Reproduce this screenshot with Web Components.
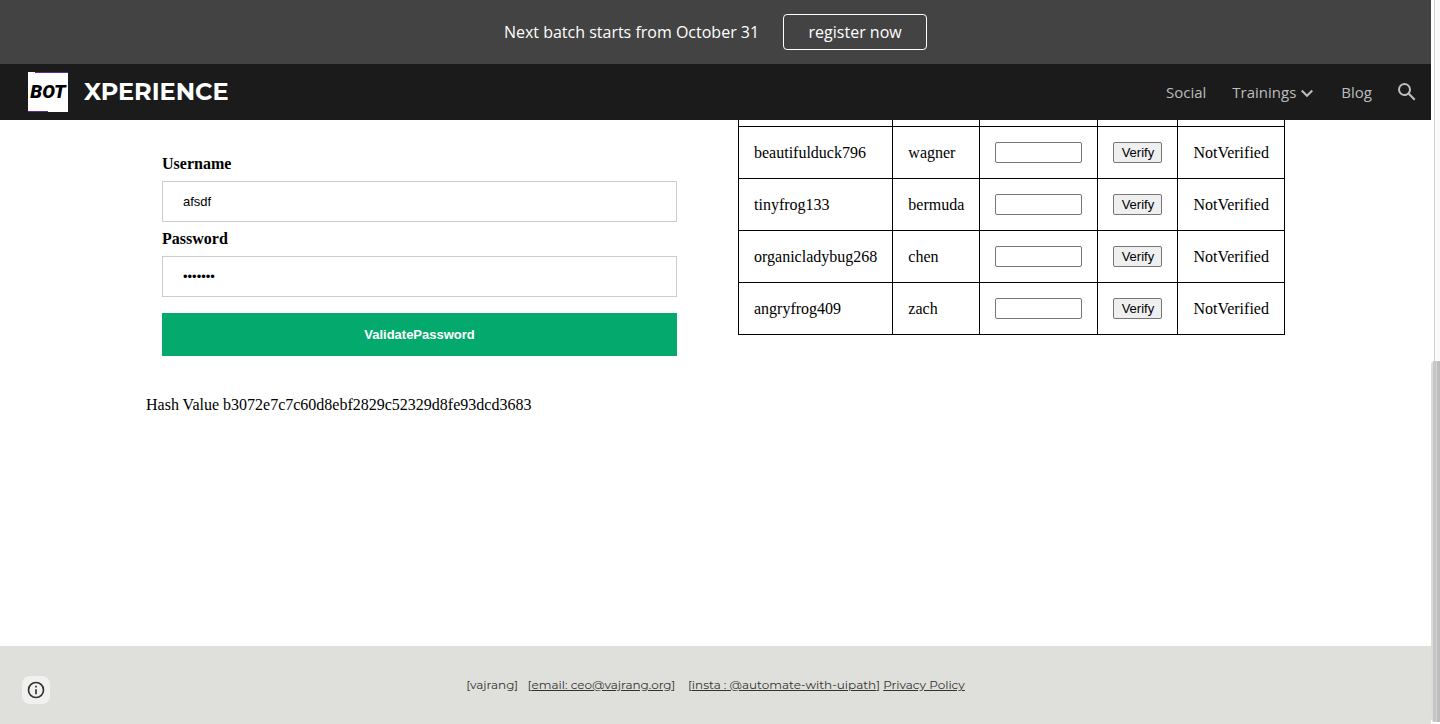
<!DOCTYPE html>
<html lang="en">
<head>
<meta charset="utf-8">
<meta name="viewport" content="width=device-width, initial-scale=1">
<title>Bot Xperience</title>
<style>
body { margin: 0; background: #fff; }
</style>
</head>
<body>
<bot-page></bot-page>
<script>
const define = (name, html, setup) => customElements.define(name, class extends HTMLElement {
  constructor() {
    super();
    const template = document.createElement('template');
    template.innerHTML = html;
    this.attachShadow({ mode: 'open' }).append(template.content.cloneNode(true));
  }
  connectedCallback() {
    if (setup && !this.ready) { this.ready = true; setup(this.shadowRoot, this); }
  }
});

define('promo-banner', `
<style>
:host { display: flex; align-items: center; justify-content: center; gap: 24px; height: 64px;
  background: #434343; color: #fff; font: 500 16px/24px "Open Sans", sans-serif; }
a { box-sizing: border-box; height: 36px; min-width: 144px; padding: 5px 20px; border: 1px solid #fff; border-radius: 4px;
  color: inherit; text-align: center; text-decoration: none; }
</style>
<span><slot></slot></span><a href="#register">register now</a>`);

define('bot-logo', `
<style>
:host { display: block; width: 40px; height: 40px; }
svg { display: block; }
text { font: italic 900 19px Roboto, "Liberation Sans", sans-serif; }
</style>
<svg width="40" height="40" viewBox="0 0 40 40" role="img" aria-label="BOT">
<rect width="40" height="40" fill="#fff"/>
<path d="M7 0h33v1H7zM0 39h20v1H0z" fill="#5b2ba0"/>
<text x="20" y="26" text-anchor="middle">BOT</text>
</svg>`);

define('site-header', `
<style>
:host { display: flex; align-items: center; height: 56px; padding: 0 12px 0 28px; background: #1b1b1b; color: #bdbdbd;
  font: 15px/20px "Open Sans", sans-serif; }
a { color: inherit; text-decoration: none; }
.brand { display: flex; align-items: center; gap: 16px; margin-right: auto; color: #fff;
  font: 700 24px/32px Montserrat, Inter, sans-serif; }
nav { display: flex; align-items: center; gap: 26px; }
nav a { display: flex; align-items: center; gap: 3px; }
button { display: block; padding: 0; border: 0; background: none; color: inherit; margin-left: -3px; }
svg { display: block; }
</style>
<a class="brand" href="#home"><bot-logo></bot-logo><span>XPERIENCE</span></a>
<nav>
<a href="#social">Social</a>
<a href="#trainings">Trainings <svg width="16" height="16" viewBox="0 0 16 16" fill="none" stroke="currentColor" stroke-width="2"><path d="M2.700 6.500L8 11.800l5.300-5.300"/></svg></a>
<a href="#blog">Blog</a>
<button aria-label="Search"><svg width="24" height="24" viewBox="0 0 24 24" fill="currentColor"><path d="M20.49 19l-5.73-5.73C15.53 12.2 16 10.91 16 9.5A6.5 6.5 0 1 0 9.5 16c1.41 0 2.7-.47 3.77-1.24L19 20.49 20.49 19zM5 9.500C5 7.010 7.010 5 9.500 5S14 7.010 14 9.500 11.990 14 9.500 14 5 11.990 5 9.500z"/></svg></button>
</nav>`);

define('login-form', `
<style>
:host { display: block; padding: 34px 16px 0; font: 16px/20px "Liberation Serif", serif; }
label { display: block; font-weight: 700; }
input { display: block; box-sizing: border-box; width: 100%; height: 41px; margin: 7px 0; padding: 12px 20px;
  border: 1px solid #ccc; background: #fff; color: #000; font: 13px/15px "Liberation Sans", sans-serif; }
button { display: block; width: 100%; height: 43px; margin-top: 16px; border: 0; background: #04aa6d; color: #fff;
  font: 700 13px/15px "Liberation Sans", sans-serif; }
</style>
<form onsubmit="return false">
<label for="user">Username</label><input id="user" type="text" value="afsdf">
<label for="pass">Password</label><input id="pass" type="password" value="abcdefg">
<button type="submit">ValidatePassword</button>
</form>`);

define('hash-result', `
<style>
:host { display: block; padding-top: 39px; font: 16px/20px "Liberation Serif", serif; }
</style>
<output>Hash Value <slot></slot></output>`);

define('user-table', `
<style>
:host { display: block; font: 16px/20px "Liberation Serif", serif; }
table { width: 100%; border-collapse: collapse; }
td { box-sizing: border-box; height: 52px; padding: 1px 15px 0; border: 1px solid #000; }
tr:first-child td { height: 6px; border-top: 0; }
td:nth-child(3) { width: 118px; }
td:nth-child(4) { width: 80px; }
input, button { display: block; box-sizing: border-box; font: 13px/15px "Liberation Sans", sans-serif; border: 1px solid #767676; }
input { width: 87px; height: 21px; border-radius: 2px; background: #fff; }
button { width: 49px; height: 21px; padding: 0; border-radius: 2px; background: #efefef; color: #000; }
</style>
<table><tbody><tr><td></td><td></td><td></td><td></td><td></td></tr></tbody></table>`, root => {
  const body = root.querySelector('tbody');
  for (const [user, password] of [['beautifulduck796', 'wagner'], ['tinyfrog133', 'bermuda'], ['organicladybug268', 'chen'], ['angryfrog409', 'zach']]) {
    body.insertAdjacentHTML('beforeend', `<tr><td>${user}</td><td>${password}</td><td><input type="text" aria-label="Hash for ${user}"></td><td><button type="button">Verify</button></td><td>NotVerified</td></tr>`);
  }
});

define('site-footer', `
<style>
:host { display: flex; align-items: center; justify-content: center; height: 78px; background: #dfe0db; color: #333;
  font: 12px/20px Montserrat, Inter, sans-serif; white-space: pre; }
a { color: inherit; }
</style>
<p>[vajrang]   [<a href="#email">email: ceo@vajrang.org</a>]    [<a href="#insta">insta : @automate-with-uipath</a>] <a href="#privacy">Privacy Policy</a></p>`);

define('info-button', `
<style>
:host { position: fixed; left: 22px; bottom: 20px; }
button { display: grid; place-items: center; width: 28px; height: 28px; padding: 0; border: 0; border-radius: 8px; background: #f1f1ef; color: #333; }
svg { display: block; }
</style>
<button aria-label="Site information"><svg width="20" height="20" viewBox="0 0 24 24" fill="currentColor"><path d="M11 17h2v-6h-2v6zm1-15a10 10 0 1 0 0 20 10 10 0 0 0 0-20zm0 18a8 8 0 1 1 0-16 8 8 0 0 1 0 16zM11 9h2V7h-2v2z"/></svg></button>`);

define('scroll-rail', `
<style>
:host { display: grid; grid-template-rows: 1fr 1fr; padding-bottom: 2px; background: #fff; }
.track { margin-left: 3px; border-left: 1px solid #d0d0d0; background: #fafafa; }
.thumb { border-radius: 4px 0 0 4px; background: linear-gradient(90deg, #dcdcdc 2px, #c6c6c6 2px 5px, #d4d4d4 5px 6px, #bdbdbd 6px); }
</style>
<div class="track"></div><div class="thumb"></div>`);

define('bot-page', `
<style>
:host { display: grid; grid-template-columns: 1fr 9px; min-height: 100vh; color: #000; }
.page { display: flex; flex-direction: column; min-width: 0; }
main { flex: 1; display: grid; grid-template-columns: 1fr 1fr; gap: 45px; align-items: start;
  box-sizing: border-box; width: 100%; max-width: 1139px; margin: 0 auto; }
</style>
<div class="page">
<promo-banner>Next batch starts from October 31</promo-banner>
<site-header></site-header>
<main>
<section><login-form></login-form><hash-result>b3072e7c7c60d8ebf2829c52329d8fe93dcd3683</hash-result></section>
<user-table></user-table>
</main>
<site-footer></site-footer>
</div>
<scroll-rail></scroll-rail>
<info-button></info-button>`);
</script>
</body>
</html>
